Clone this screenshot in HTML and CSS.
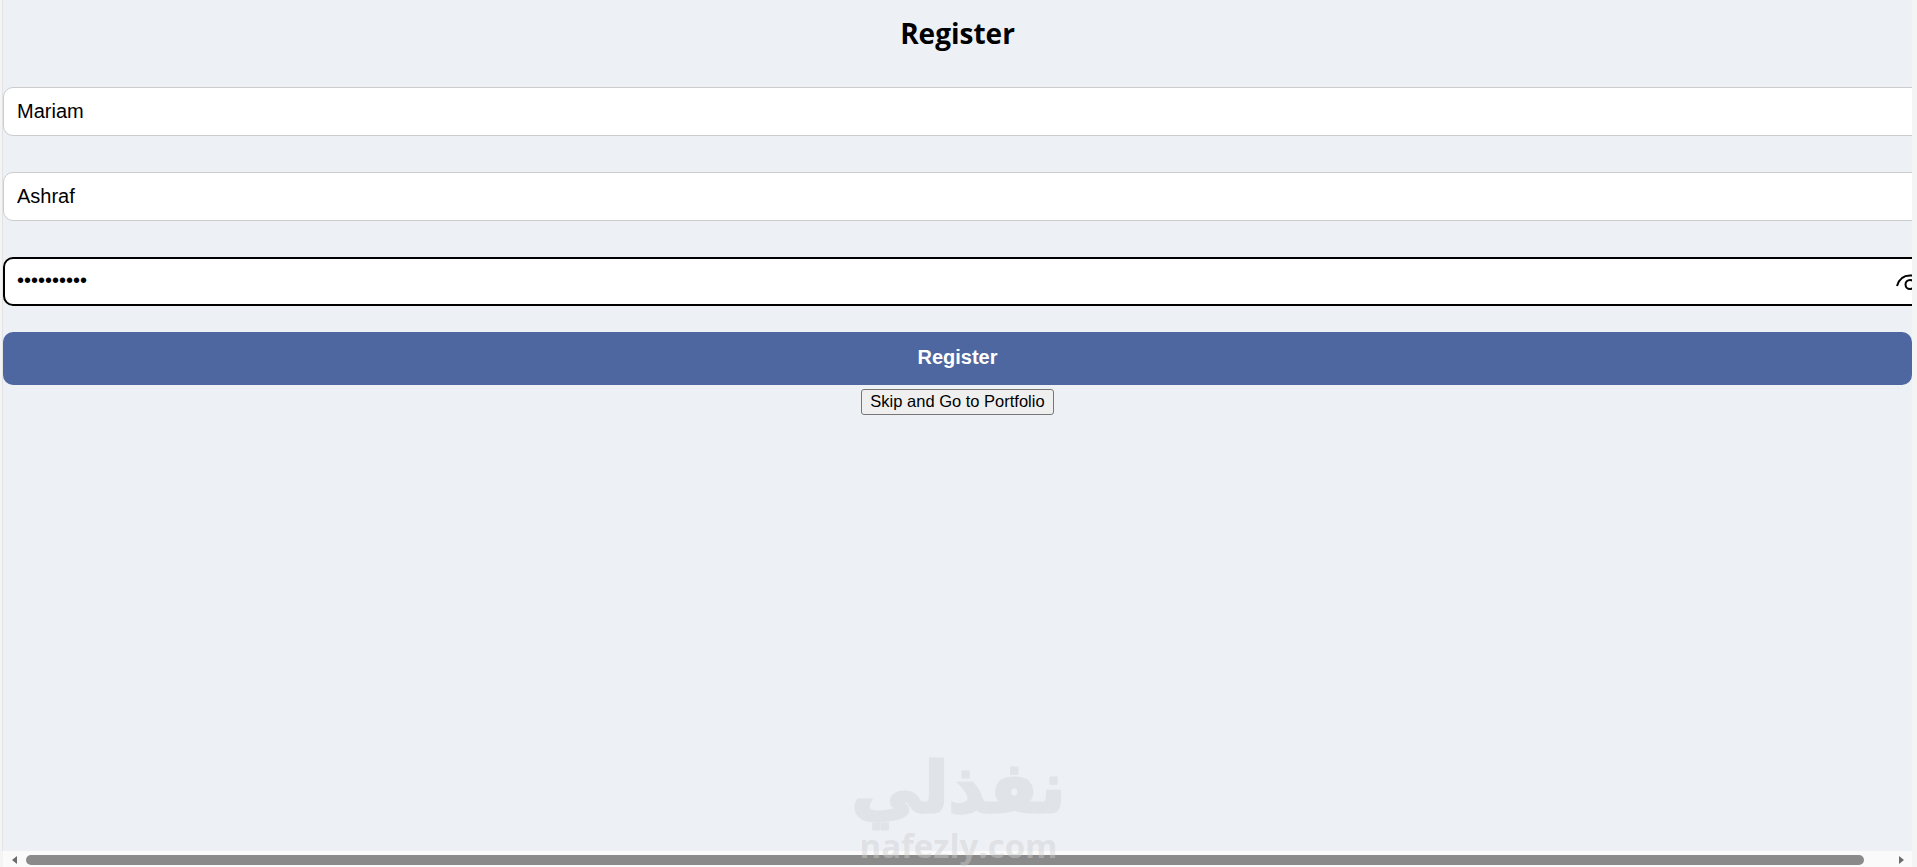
FILE: index.html
```html
<!DOCTYPE html>
<html lang="en">

<head>
    <meta charset="UTF-8" />
    <meta name="viewport" content="width=device-width, initial-scale=1.0" />
    <title>Register</title>
    <link rel="stylesheet" href="styles.css">
</head>

<body>
    <div class="viewport">
        <div class="page">
            <h2 class="title">Register</h2>
            <form class="register-form">
                <div class="field">
                    <input type="text" value="Mariam" />
                </div>
                <div class="field">
                    <input type="text" value="Ashraf" />
                </div>
                <div class="field field-password">
                    <input type="password" class="focused" value="mariam1234" />
                    <svg class="eye" viewBox="0 0 28 20" fill="none" stroke="#000" stroke-width="2">
                        <path d="M1 13C3 6 8 2.5 14 2.5s11 3.5 13 10.5" />
                        <circle cx="14" cy="11.5" r="4.5" />
                    </svg>
                </div>
                <button type="button" class="submit">Register</button>
            </form>
            <button type="button" class="skip">Skip and Go to Portfolio</button>
        </div>
    </div>

    <div class="scrollbar">
        <span class="arrow arrow-left"></span>
        <span class="thumb"></span>
        <span class="arrow arrow-right"></span>
    </div>

    <div class="watermark">
        <div class="watermark-ar" dir="rtl" lang="ar">نفذلي</div>
        <div class="watermark-en">nafezly.com</div>
    </div>
</body>

</html>
```

FILE: styles.css
```css
* {
    box-sizing: border-box;
}

html,
body {
    height: 100%;
}

body {
    margin: 0;
    position: relative;
    background-color: #f4f4f5;
    color: #000;
    font-family: 'Liberation Sans', Arial, sans-serif;
    display: flex;
    flex-direction: column;
    overflow: hidden;
}

.viewport {
    flex: 1;
    margin: 0 5px 0 2px;
    border-left: 1px solid #e2e3e5;
    background-color: #edf1f6;
    overflow: hidden;
}

.page {
    display: flex;
    flex-direction: column;
    align-items: center;
}

.title {
    margin: 0;
    padding-top: 16px;
    height: 87px;
    font-family: 'Open Sans', sans-serif;
    font-size: 28px;
    line-height: 34px;
    font-weight: 700;
}

.register-form {
    width: 100%;
    display: flex;
    flex-direction: column;
}

.field {
    position: relative;
    height: 49px;
    margin-bottom: 36px;
    width: calc(100% + 30px);
}

.field-password {
    margin-bottom: 26px;
}

.field input {
    width: 100%;
    height: 100%;
    padding: 0 13px;
    border: 1px solid #ccc;
    border-radius: 10px;
    background: #fff;
    font-family: inherit;
    font-size: 20px;
    outline: none;
}

.field input.focused {
    border: 2px solid #000;
    padding: 0 12px 2px;
}

.eye {
    position: absolute;
    top: 16px;
    left: 1893px;
    width: 28px;
    height: 20px;
}

.submit {
    width: 100%;
    height: 53px;
    padding: 0 0 2px;
    border: none;
    border-radius: 10px;
    background-color: #4e67a0;
    color: #fff;
    font-family: inherit;
    font-size: 20px;
    font-weight: 700;
}

.skip {
    margin-top: 4px;
    height: 26px;
    padding: 0 8px 1px;
    border: 1px solid #767676;
    border-radius: 3px;
    background-color: #efefef;
    color: #000;
    font-family: inherit;
    font-size: 16.5px;
}

.watermark {
    position: absolute;
    left: 0;
    right: 0;
    top: 749px;
    display: flex;
    flex-direction: column;
    align-items: center;
    font-weight: 700;
}

.watermark-ar {
    color: #e0e3e8;
    font-family: 'DejaVu Sans', sans-serif;
    font-size: 70px;
    line-height: 78px;
    -webkit-text-stroke: 3px #e0e3e8;
}

.watermark-en {
    color: rgba(205, 205, 205, 0.45);
    font-family: 'Open Sans', sans-serif;
    font-size: 33px;
    line-height: 37px;
}

.scrollbar {
    height: 16px;
    flex: none;
    display: flex;
    align-items: center;
    padding-top: 1px;
    margin: 0 5px 0 3px;
    background-color: #fafafa;
}

.thumb {
    flex: 1;
    height: 10px;
    margin: 0 35px 0 9px;
    border-radius: 5px;
    background-color: #8a8a8a;
}

.arrow {
    flex: none;
    width: 0;
    height: 0;
    border-top: 4px solid transparent;
    border-bottom: 4px solid transparent;
}

.arrow-left {
    margin-left: 9px;
    border-right: 5px solid #6b6b6b;
}

.arrow-right {
    margin-right: 8px;
    border-left: 5px solid #6b6b6b;
}
```
